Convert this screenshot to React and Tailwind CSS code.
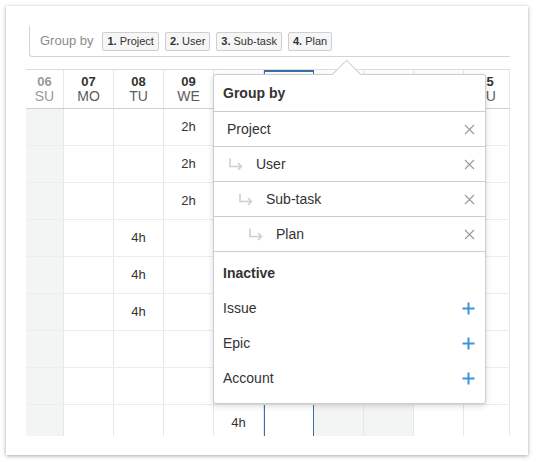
import React from 'react';

const days = [
  { n: '06', d: 'SU', w: 'w-[38px]', weekend: true },
  { n: '07', d: 'MO', w: 'w-[50px]' },
  { n: '08', d: 'TU', w: 'w-[50px]' },
  { n: '09', d: 'WE', w: 'w-[50px]' },
  { n: '10', d: 'TH', w: 'w-[50px]' },
  { n: '11', d: 'FR', w: 'w-[50px]', today: true },
  { n: '12', d: 'SA', w: 'w-[50px]', weekend: true },
  { n: '13', d: 'SU', w: 'w-[50px]', weekend: true },
  { n: '14', d: 'MO', w: 'w-[50px]' },
  { n: '15', d: 'TU', w: 'w-[46px]' },
];

// which column holds hours on each row
const rows = [
  { col: 3, h: '2h' },
  { col: 3, h: '2h' },
  { col: 3, h: '2h' },
  { col: 2, h: '4h' },
  { col: 2, h: '4h' },
  { col: 2, h: '4h' },
  null,
  null,
  { col: 4, h: '4h' },
];

const chips = [
  ['1.', 'Project'],
  ['2.', 'User'],
  ['3.', 'Sub-task'],
  ['4.', 'Plan'],
];

const active = [
  { label: 'Project', level: 0 },
  { label: 'User', level: 1 },
  { label: 'Sub-task', level: 2 },
  { label: 'Plan', level: 3 },
];

const inactive = ['Issue', 'Epic', 'Account'];

const indent = ['pl-[13px]', 'pl-[14px]', 'pl-[24px]', 'pl-[34px]'];

function CloseIcon() {
  return (
    <svg width="11" height="11" viewBox="0 0 11 11" className="text-[#999]">
      <path d="M1 1l9 9M10 1l-9 9" stroke="currentColor" strokeWidth="1.1" fill="none" />
    </svg>
  );
}

function PlusIcon() {
  return (
    <svg width="13" height="13" viewBox="0 0 13 13" className="text-[#3b94dc]">
      <path d="M6.5 0.5v12M0.5 6.5h12" stroke="currentColor" strokeWidth="2" fill="none" />
    </svg>
  );
}

function SubArrow() {
  return (
    <svg width="15" height="13" viewBox="0 0 15 13" className="text-[#cfcfcf] mr-[13px] shrink-0">
      <path d="M2 0.5v8h11.5M10 5l3.5 3.5L10 12" stroke="currentColor" strokeWidth="1.6" fill="none" />
    </svg>
  );
}

function cellClass(day) {
  let c = `${day.w} shrink-0 border-r border-[#e6e6e6] flex items-center justify-center`;
  if (day.weekend) c += ' bg-[#f3f4f4]';
  if (day.today) c += ' border-l border-l-[#3a6fae] border-r-[#3a6fae]';
  return c;
}

export default function App() {
  return (
    <div className="w-[536px] h-[462px] bg-white pt-[6px] pl-[6px]" style={{ fontFamily: '"Liberation Sans", Arial, sans-serif' }}>
      <div className="relative w-[522px] h-[449px] bg-white shadow-[0_1px_4px_rgba(0,0,0,0.35)] pt-[20px] pl-[20px]">
        {/* group by bar */}
        <div className="ml-[3px] w-[481px] h-[31px] border-l border-b border-[#d4d4d4] rounded-bl-[3px] flex items-center pl-[10px] gap-[6px]">
          <span className="text-[13px] text-[#8c8c8c] mr-[3px]">Group by</span>
          {chips.map(([num, label]) => (
            <span
              key={label}
              className="h-[19px] px-[4px] flex items-center border border-[#cfcfcf] rounded-[2px] bg-[#f6f6f6] text-[11px] text-[#333]"
            >
              <b className="mr-[3px]">{num}</b>
              {label}
            </span>
          ))}
        </div>

        {/* calendar */}
        <div className="mt-[12px] w-[484px] h-[367px] overflow-hidden border-t border-[#dcdcdc]">
          <div className="flex h-[39px] border-b border-[#cfcfcf]">
            {days.map((day) => (
              <div
                key={day.n}
                className={`${day.w} shrink-0 flex flex-col items-center pt-[5px] border-r border-[#e6e6e6] ${day.today ? 'border-t-2 border-t-[#3a6fae] border-l border-l-[#3a6fae] border-r-[#3a6fae]' : ''}`}
              >
                <span className={`text-[13px] font-bold leading-[14px] ${day.weekend ? 'text-[#9a9a9a]' : 'text-[#333]'}`}>{day.n}</span>
                <span className={`text-[14px] leading-[15px] ${day.weekend ? 'text-[#9a9a9a]' : 'text-[#5c5c5c]'}`}>{day.d}</span>
              </div>
            ))}
          </div>
          {rows.map((row, i) => (
            <div key={i} className="flex h-[37px] border-b border-[#ececec]">
              {days.map((day, j) => (
                <div key={day.n} className={`${cellClass(day)} text-[13px] text-[#333]`}>
                  {row && row.col === j ? row.h : ''}
                </div>
              ))}
            </div>
          ))}
        </div>

        {/* group by popup */}
        <div className="absolute left-[207px] top-[68px] w-[273px] h-[330px] bg-white border border-[#cdcdcd] rounded-[3px] shadow-[0_2px_6px_rgba(0,0,0,0.15)] text-[14px] text-[#333]">
          <div className="absolute left-[122px] top-[-11px] w-[21px] h-[21px] rotate-45 bg-white border-t border-l border-[#cdcdcd]" />
          <div className="relative h-[36px] flex items-center pl-[9px] font-bold">Group by</div>
          {active.map((item) => (
            <div
              key={item.label}
              className={`h-[35px] flex items-center border-t border-[#cdcdcd] pr-[10px] ${indent[item.level]}`}
            >
              {item.level > 0 && <SubArrow />}
              <span className="flex-1">{item.label}</span>
              <CloseIcon />
            </div>
          ))}
          <div className="border-t border-[#cdcdcd] pt-[8px]">
            <div className="h-[26px] mb-[5px] flex items-center pl-[9px] font-bold">Inactive</div>
            {inactive.map((label) => (
              <div key={label} className="h-[35px] flex items-center pl-[9px] pr-[10px]">
                <span className="flex-1">{label}</span>
                <PlusIcon />
              </div>
            ))}
          </div>
        </div>
      </div>
    </div>
  );
}
